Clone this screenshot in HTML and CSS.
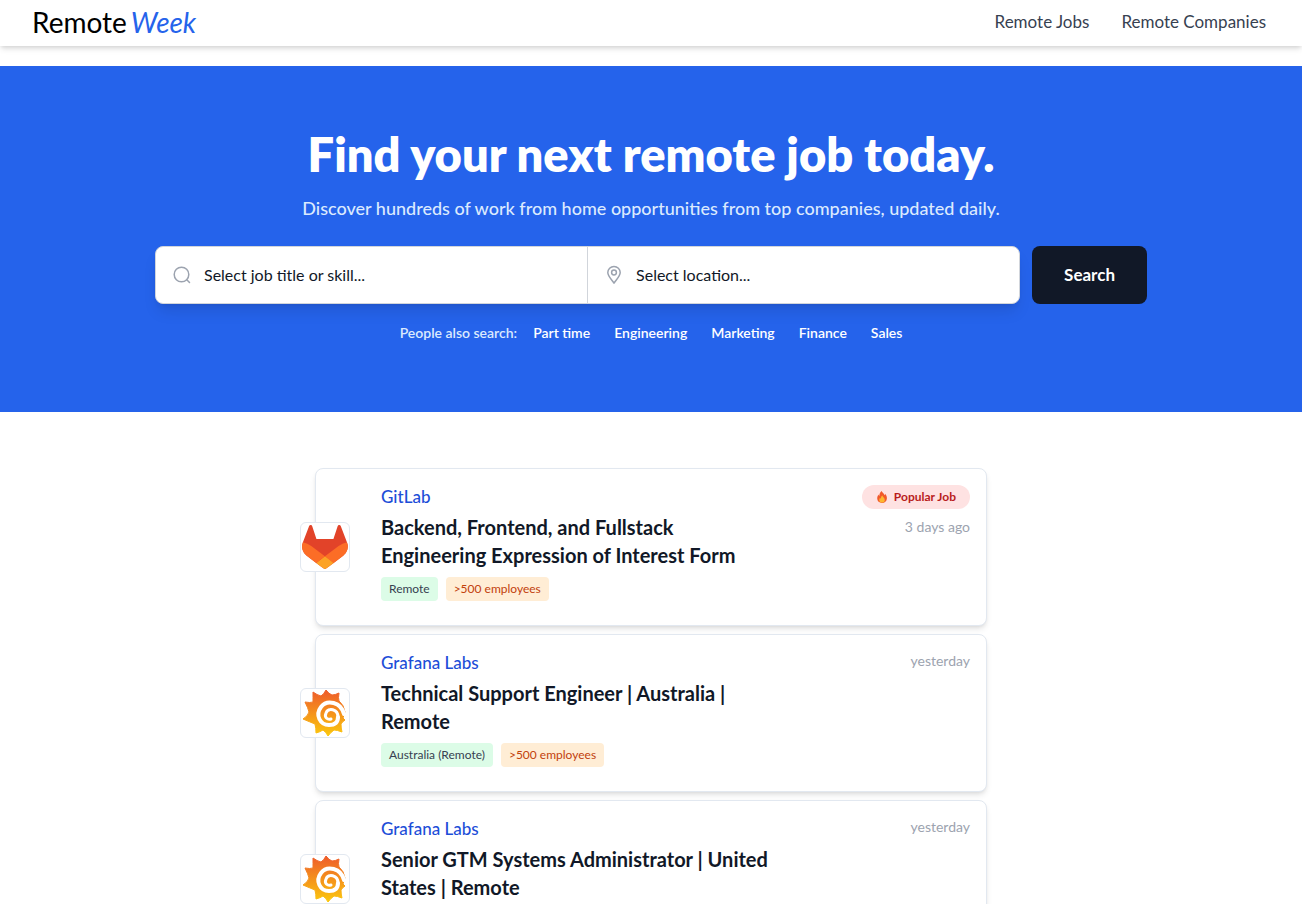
FILE: index.html
```html
<!DOCTYPE html>
<html lang="en">
<head>
    <meta charset="UTF-8">
    <meta name="viewport" content="width=device-width, initial-scale=1.0">
    <title>RemoteWeek</title>
    <link rel="stylesheet" href="styles.css">
</head>
<body>
    <svg class="sprite" aria-hidden="true">
        <defs>
            <linearGradient id="grafanaFill" x1="0" y1="0" x2="0" y2="1">
                <stop offset="0" stop-color="#ee5b2b"/>
                <stop offset="1" stop-color="#fbc80d"/>
            </linearGradient>
            <symbol id="grafana" viewBox="0 0 48 48">
                <path fill="url(#grafanaFill)" stroke="url(#grafanaFill)" stroke-width="1" stroke-linejoin="round" d="M25 1Q28 5 31 6Q34 6 38 4Q37 9 38 12Q43 16 44 23L42 29Q43 30 44 31Q41 33 40 35Q40 39 41 43Q36 41 33 41Q30 43 27 47Q25 43 22 41Q19 43 15 44Q15 39 14 35Q9 33 2 30Q7 27 8 23Q7 19 4 13Q9 14 12 13Q12 9 12 3Q16 6 20 7Q23 5 25 1Z"/>
                <path fill="none" stroke="#fff" stroke-width="4" stroke-linecap="round" d="M43 25C40 13 26 10 20 18C14 26 19 36 28 36C34 36 37 33 37 28"/>
                <path fill="none" stroke="#fff" stroke-width="3" stroke-linecap="round" d="M37 28C37 20 27 18 25 24C23 29 27 31 30 30"/>
            </symbol>
        </defs>
    </svg>

    <header class="site-header">
        <a href="#" class="logo">Remote<span class="logo-week">Week</span></a>
        <nav class="main-nav">
            <a href="#">Remote Jobs</a>
            <a href="#">Remote Companies</a>
        </nav>
    </header>

    <section class="hero">
        <h1>Find your next remote job today.</h1>
        <p class="hero-text">Discover hundreds of work from home opportunities from top companies, updated daily.</p>
        <form class="search-form">
            <div class="search-fields">
                <label class="search-field">
                    <svg width="20" height="20" viewBox="0 0 20 20" fill="none" stroke="currentColor" stroke-width="1.5" stroke-linecap="round" aria-hidden="true">
                        <circle cx="9.5" cy="9.5" r="7.3"/>
                        <path d="M14.8 14.8L17.5 17.5"/>
                    </svg>
                    <select name="skill" aria-label="Job title or skill">
                        <option>Select job title or skill...</option>
                    </select>
                </label>
                <label class="search-field">
                    <svg width="20" height="20" viewBox="0 0 20 20" fill="none" stroke="currentColor" stroke-width="1.5" stroke-linejoin="round" aria-hidden="true">
                        <path d="M10 18.2C8.5 15.5 3.8 11.5 3.8 7.6A6.2 6.2 0 0 1 16.2 7.6C16.2 11.5 11.5 15.5 10 18.2Z"/>
                        <circle cx="10" cy="7.5" r="2.4"/>
                    </svg>
                    <select name="location" aria-label="Location">
                        <option>Select location...</option>
                    </select>
                </label>
            </div>
            <button type="submit" class="btn">Search</button>
        </form>
        <div class="suggestions">
            <span class="suggestions-label">People also search:</span>
            <a href="#">Part time</a>
            <a href="#">Engineering</a>
            <a href="#">Marketing</a>
            <a href="#">Finance</a>
            <a href="#">Sales</a>
        </div>
    </section>

    <main class="job-list">
        <article class="job-card">
            <div class="company-logo">
                <svg width="46" height="44" viewBox="0 0 25 24" aria-hidden="true">
                    <path fill="#e24329" d="M24.507 9.5l-.034-.09L21.082.562a.896.896 0 00-1.694.091l-2.29 7.01H7.825L5.535.653a.898.898 0 00-1.694-.09L.451 9.411.416 9.5a6.297 6.297 0 002.09 7.278l.012.01.03.022 5.16 3.867 2.56 1.935 1.554 1.176a1.051 1.051 0 001.268 0l1.555-1.176 2.56-1.935 5.197-3.89.014-.01A6.297 6.297 0 0024.507 9.5z"/>
                    <path fill="#fc6d26" d="M24.507 9.5l-.034-.09a11.44 11.44 0 00-4.56 2.051l-7.447 5.632 4.742 3.584 5.197-3.89.014-.01A6.297 6.297 0 0024.507 9.5z"/>
                    <path fill="#fca326" d="M7.707 20.677l2.56 1.935 1.555 1.176a1.051 1.051 0 001.268 0l1.555-1.176 2.56-1.935-4.743-3.584-4.755 3.584z"/>
                    <path fill="#fc6d26" d="M5.01 11.461a11.43 11.43 0 00-4.56-2.05L.416 9.5a6.297 6.297 0 002.09 7.278l.012.01.03.022 5.16 3.867 4.745-3.584-7.444-5.632z"/>
                </svg>
            </div>
            <div class="job-info">
                <a href="#" class="company-name">GitLab</a>
                <h2>Backend, Frontend, and Fullstack Engineering Expression of Interest Form</h2>
                <div class="tags">
                    <span class="tag tag-green">Remote</span>
                    <span class="tag tag-orange">&gt;500 employees</span>
                </div>
            </div>
            <div class="job-meta">
                <span class="badge">
                    <svg width="12" height="12" viewBox="0 0 12 12" aria-hidden="true">
                        <path fill="#f1592a" d="M5.6 0C6 1.5 8.2 2.4 8.6 4.2C9 3.8 9.1 3.3 9 2.8C10.2 4 11 5.6 10.9 7.4C10.7 10.2 8.7 12 6 12C3.2 12 1.2 10.1 1.2 7.3C1.2 5.5 2 4.3 2.6 3.4C2.7 4.1 2.9 4.6 3.3 4.9C3.4 3 4.2 1 5.6 0Z"/>
                        <path fill="#fdb62f" d="M6.4 4.6C6.6 6 8.8 6.9 8.8 8.9C8.8 10.6 7.6 11.6 6 11.6C4.4 11.6 3.2 10.5 3.2 8.9C3.2 8 3.6 7.3 4 6.8C4.2 7.3 4.5 7.6 4.9 7.7C4.8 6.5 5.4 5.3 6.4 4.6Z"/>
                    </svg>
                    Popular Job
                </span>
                <span class="date">3 days ago</span>
            </div>
        </article>

        <article class="job-card">
            <div class="company-logo">
                <svg width="48" height="48" aria-hidden="true"><use href="#grafana"/></svg>
            </div>
            <div class="job-info">
                <a href="#" class="company-name">Grafana Labs</a>
                <h2>Technical Support Engineer | Australia | Remote</h2>
                <div class="tags">
                    <span class="tag tag-green">Australia (Remote)</span>
                    <span class="tag tag-orange">&gt;500 employees</span>
                </div>
            </div>
            <div class="job-meta">
                <span class="date">yesterday</span>
            </div>
        </article>

        <article class="job-card">
            <div class="company-logo">
                <svg width="48" height="48" aria-hidden="true"><use href="#grafana"/></svg>
            </div>
            <div class="job-info">
                <a href="#" class="company-name">Grafana Labs</a>
                <h2>Senior GTM Systems Administrator | United States | Remote</h2>
            </div>
            <div class="job-meta">
                <span class="date">yesterday</span>
            </div>
        </article>
    </main>
</body>
</html>
```
FILE: styles.css
```css
:root {
    --primary-color: #2563eb;
    --link-color: #1d4ed8;
    --text-color: #111827;
    --nav-color: #374151;
    --muted-color: #9ca3af;
    --border-color: #e2e8f0;
}

* {
    margin: 0;
    padding: 0;
    box-sizing: border-box;
}

body {
    background-color: #ffffff;
    color: var(--text-color);
    font-family: Lato, "Open Sans", sans-serif;
    font-size: 16px;
    line-height: 24px;
}

a {
    color: inherit;
    text-decoration: none;
}

.sprite {
    position: absolute;
    width: 0;
    height: 0;
}

/* Header */
.site-header {
    display: flex;
    align-items: center;
    justify-content: space-between;
    padding: 0 36px 2px 32px;
    margin-bottom: 20px;
    box-shadow: 0 4px 6px -1px rgba(0, 0, 0, 0.1),
                0 2px 4px -1px rgba(0, 0, 0, 0.1);
}

.logo {
    display: flex;
    gap: 4px;
    font-size: 28px;
    line-height: 44px;
    color: #000000;
}

.logo-week {
    color: var(--primary-color);
    font-style: italic;
    font-weight: 400;
}

.main-nav {
    display: flex;
    gap: 32px;
    color: var(--nav-color);
    font-size: 17px;
}

/* Hero */
.hero {
    background-color: var(--primary-color);
    color: #ffffff;
    padding: 64px 16px 69px;
    text-align: center;
}

.hero h1 {
    font-size: 47px;
    font-weight: 800;
    line-height: 48px;
}

.hero-text {
    margin-top: 16px;
    font-size: 18px;
    font-weight: 500;
    line-height: 28px;
    color: #dbeafe;
}

.search-form {
    display: flex;
    gap: 12px;
    max-width: 992px;
    margin: 24px auto 0;
}

.search-fields {
    display: flex;
    flex: 1;
    background-color: #ffffff;
    border: 1px solid #d1d5db;
    border-radius: 8px;
    box-shadow: 0 10px 15px -3px rgba(0, 0, 0, 0.1),
                0 4px 6px -4px rgba(0, 0, 0, 0.1);
}

.search-field {
    display: flex;
    flex: 1;
    align-items: center;
    gap: 12px;
    height: 56px;
    padding: 0 16px;
    color: var(--muted-color);
}

.search-field + .search-field {
    border-left: 1px solid #d1d5db;
}

.search-field select {
    flex: 1;
    height: 100%;
    padding-bottom: 2px;
    appearance: none;
    background: transparent;
    border: none;
    outline: none;
    color: var(--text-color);
    font-family: inherit;
    font-size: 16px;
}

.btn {
    padding: 0 32px 2px;
    background-color: var(--text-color);
    color: #ffffff;
    border: none;
    border-radius: 8px;
    font-family: inherit;
    font-size: 17px;
    font-weight: 700;
    cursor: pointer;
}

.btn:hover {
    background-color: #1f2937;
}

.suggestions {
    display: flex;
    justify-content: center;
    gap: 24px;
    margin-top: 19px;
    font-size: 14px;
    font-weight: 600;
    line-height: 20px;
}

.suggestions-label {
    margin-right: -8px;
    color: #dbeafe;
}

/* Job list */
.job-list {
    display: flex;
    flex-direction: column;
    gap: 8px;
    max-width: 672px;
    margin: 56px auto 0;
}

.job-card {
    position: relative;
    display: flex;
    justify-content: space-between;
    min-height: 158px;
    padding: 16px 16px 24px 65px;
    background-color: #ffffff;
    border: 1px solid var(--border-color);
    border-radius: 8px;
    box-shadow: 0 4px 6px -1px rgba(0, 0, 0, 0.1),
                0 2px 4px -2px rgba(0, 0, 0, 0.1);
}

.company-logo {
    position: absolute;
    top: 50%;
    left: -16px;
    display: flex;
    align-items: center;
    justify-content: center;
    width: 50px;
    height: 50px;
    margin-top: -25px;
    background-color: #ffffff;
    border: 1px solid var(--border-color);
    border-radius: 6px;
}

.job-info {
    flex: 0 1 400px;
}

.company-name {
    display: block;
    color: var(--link-color);
    font-size: 17px;
    font-weight: 500;
}

.job-info h2 {
    margin-top: 4px;
    font-size: 20px;
    font-weight: 700;
    line-height: 28px;
}

.tags {
    display: flex;
    gap: 8px;
    margin-top: 8px;
}

.tag {
    padding: 4px 8px;
    border-radius: 4px;
    font-size: 12px;
    line-height: 16px;
}

.tag-green {
    background-color: #dcfce7;
    color: var(--nav-color);
}

.tag-orange {
    background-color: #ffedd5;
    color: #c2410c;
}

.job-meta {
    display: flex;
    flex-direction: column;
    align-items: flex-end;
    gap: 8px;
}

.badge {
    display: flex;
    align-items: center;
    gap: 6px;
    padding: 4px 14px;
    background-color: #fee2e2;
    border-radius: 12px;
    color: #b91c1c;
    font-size: 12px;
    font-weight: 700;
    line-height: 16px;
}

.date {
    color: var(--muted-color);
    font-size: 14px;
    line-height: 20px;
}

@media (max-width: 640px) {
    .search-form,
    .search-fields {
        flex-direction: column;
    }

    .btn {
        height: 56px;
    }

    .suggestions {
        flex-wrap: wrap;
    }

    .job-list {
        padding: 0 16px;
    }
}
```
